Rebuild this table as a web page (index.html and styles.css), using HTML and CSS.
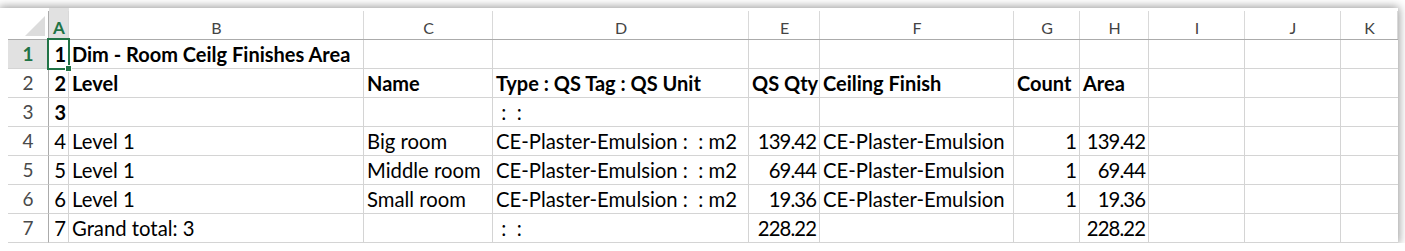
FILE: index.html
```html
<!DOCTYPE html>
<html>
<head>
<meta charset="utf-8">
<title>Dim - Room Ceilg Finishes Area</title>
<link rel="stylesheet" href="styles.css">
</head>
<body>
<div class="sheet">
  <div class="grid">
    <div class="corner"><span class="tri"></span></div>
    <div class="ch sel">A</div>
    <div class="ch">B</div>
    <div class="ch">C</div>
    <div class="ch">D</div>
    <div class="ch">E</div>
    <div class="ch">F</div>
    <div class="ch">G</div>
    <div class="ch">H</div>
    <div class="ch">I</div>
    <div class="ch">J</div>
    <div class="ch">K</div>

    <div class="rh sel">1</div>
    <div class="c a b a1">1</div>
    <div class="c b">Dim - Room Ceilg Finishes Area</div>
    <div class="c"></div><div class="c"></div><div class="c"></div><div class="c"></div><div class="c"></div><div class="c"></div><div class="c"></div><div class="c"></div><div class="c"></div>

    <div class="rh">2</div>
    <div class="c a b">2</div>
    <div class="c b">Level</div>
    <div class="c b">Name</div>
    <div class="c b">Type : QS Tag : QS Unit</div>
    <div class="c b">QS Qty</div>
    <div class="c b">Ceiling Finish</div>
    <div class="c b">Count</div>
    <div class="c b">Area</div>
    <div class="c"></div><div class="c"></div><div class="c"></div>

    <div class="rh">3</div>
    <div class="c a b">3</div>
    <div class="c"></div>
    <div class="c"></div>
    <div class="c"> :  :</div>
    <div class="c"></div><div class="c"></div><div class="c"></div><div class="c"></div><div class="c"></div><div class="c"></div><div class="c"></div>

    <div class="rh">4</div>
    <div class="c a">4</div>
    <div class="c">Level 1</div>
    <div class="c">Big room</div>
    <div class="c">CE-Plaster-Emulsion :  : m2</div>
    <div class="c n">139.42</div>
    <div class="c">CE-Plaster-Emulsion</div>
    <div class="c n">1</div>
    <div class="c n">139.42</div>
    <div class="c"></div><div class="c"></div><div class="c"></div>

    <div class="rh">5</div>
    <div class="c a">5</div>
    <div class="c">Level 1</div>
    <div class="c">Middle room</div>
    <div class="c">CE-Plaster-Emulsion :  : m2</div>
    <div class="c n">69.44</div>
    <div class="c">CE-Plaster-Emulsion</div>
    <div class="c n">1</div>
    <div class="c n">69.44</div>
    <div class="c"></div><div class="c"></div><div class="c"></div>

    <div class="rh">6</div>
    <div class="c a">6</div>
    <div class="c">Level 1</div>
    <div class="c">Small room</div>
    <div class="c">CE-Plaster-Emulsion :  : m2</div>
    <div class="c n">19.36</div>
    <div class="c">CE-Plaster-Emulsion</div>
    <div class="c n">1</div>
    <div class="c n">19.36</div>
    <div class="c"></div><div class="c"></div><div class="c"></div>

    <div class="rh">7</div>
    <div class="c a">7</div>
    <div class="c">Grand total: 3</div>
    <div class="c"></div>
    <div class="c"> :  :</div>
    <div class="c n">228.22</div>
    <div class="c"></div>
    <div class="c"></div>
    <div class="c n">228.22</div>
    <div class="c"></div><div class="c"></div><div class="c"></div>
  </div>
</div>
</body>
</html>
```
FILE: styles.css
```css
html, body {
  margin: 0;
  padding: 0;
  background: #ffffff;
  overflow: hidden;
}

.sheet {
  margin-top: 8px;
  width: max-content;
  padding-left: 8px;
  background: #ffffff;
  box-shadow: 0 0 9px 1px rgba(0, 0, 0, 0.42);
}

.grid {
  display: grid;
  grid-template-columns: 41px 20px 295px 129px 256px 71px 194px 66px 69px 96px 96px 57px;
  grid-template-rows: 32px repeat(7, 29px);
}

.grid > div {
  box-sizing: border-box;
}

/* corner select-all cell */
.corner {
  border-bottom: 1px solid #ababab;
  background: linear-gradient(#ababab, #ababab) right bottom / 1px 28px no-repeat;
  display: flex;
  justify-content: flex-end;
  align-items: flex-end;
  padding: 0 4px 3px 0;
}

.tri {
  width: 20px;
  height: 20px;
  background: #dcdcdc;
  clip-path: polygon(100% 0, 100% 100%, 0 100%);
}

/* column headers */
.ch {
  font-family: Lato, "Open Sans", sans-serif;
  font-size: 16px;
  color: #444444;
  text-align: center;
  padding-top: 8px;
  line-height: 23px;
  border-bottom: 1px solid #ababab;
  background: linear-gradient(#d9d9d9, #d9d9d9) right bottom / 1px 28px no-repeat;
}

.ch.sel {
  background-color: #e1e1e1;
  color: #217346;
  font-weight: 700;
  font-size: 17px;
}

.ch:last-child {
  background-image: none;
}

/* row headers */
.rh {
  font-family: Lato, "Open Sans", sans-serif;
  font-size: 19px;
  color: #4a4a4a;
  text-align: center;
  line-height: 28px;
  border-right: 1px solid #ababab;
  border-bottom: 1px solid #d4d4d4;
}

.rh.sel {
  background: #e1e1e1;
  color: #217346;
  font-weight: 700;
}

/* data cells */
.c {
  font-family: Lato, "Open Sans", sans-serif;
  font-size: 20.3px;
  color: #000000;
  line-height: 28px;
  padding: 0 3px;
  white-space: pre;
  border-right: 1px solid #d4d4d4;
  border-bottom: 1px solid #d4d4d4;
}

.grid > .c:nth-child(12n) {
  border-right: none;
}

.c.b {
  font-weight: 700;
  font-size: 20px;
}

.c.n {
  text-align: right;
  letter-spacing: -0.9px;
}

.c.a {
  text-align: right;
  padding: 0 2px 0 0;
}

/* active cell A1 */
.a1 {
  position: relative;
}

.a1::after {
  content: "";
  position: absolute;
  left: -2px;
  top: -2px;
  right: -2px;
  bottom: -2px;
  border: 2px solid #217346;
  z-index: 2;
}

.a1::before {
  content: "";
  position: absolute;
  right: -4px;
  bottom: -4px;
  width: 5px;
  height: 5px;
  background: #217346;
  border: 1px solid #ffffff;
  z-index: 3;
}
```
